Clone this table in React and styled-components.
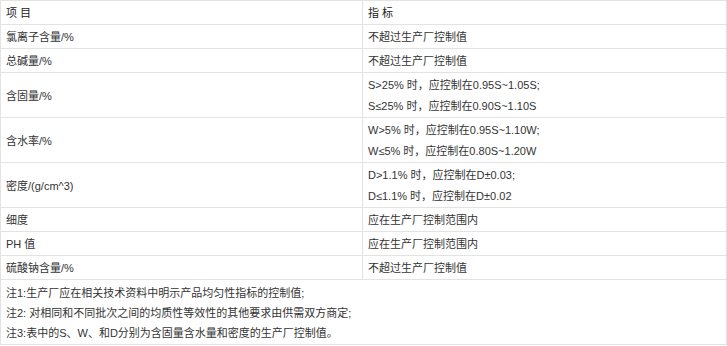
import React from 'react'
import styled, { createGlobalStyle } from 'styled-components'

const GlobalStyle = createGlobalStyle`
  body {
    margin: 0;
    background: #fff;
    font-family: "Liberation Sans", "Noto Sans CJK SC", sans-serif;
    font-size: 11px;
    color: #333;
  }
`

const Table = styled.table`
  width: 726px;
  border-collapse: collapse;
  table-layout: fixed;
  border: 1px solid #e3e3e3;
`

const Cell = styled.td`
  border: 1px solid #e3e3e3;
  padding: 2px 5px 0;
  line-height: 21px;
  vertical-align: middle;
  white-space: nowrap;
`

const HeadCell = styled(Cell)`
  color: #222;
`

const NoteCell = styled(Cell)`
  padding: 3px 5px 1px;
  line-height: 20px;
`

const Line = styled.div``

const rows = [
  ['氯离子含量/%', ['不超过生产厂控制值']],
  ['总碱量/%', ['不超过生产厂控制值']],
  ['含固量/%', ['S>25% 时，应控制在0.95S~1.05S;', 'S≤25% 时，应控制在0.90S~1.10S']],
  ['含水率/%', ['W>5% 时，应控制在0.95S~1.10W;', 'W≤5% 时，应控制在0.80S~1.20W']],
  ['密度/(g/cm^3)', ['D>1.1% 时，应控制在D±0.03;', 'D≤1.1% 时，应控制在D±0.02']],
  ['细度', ['应在生产厂控制范围内']],
  ['PH 值', ['应在生产厂控制范围内']],
  ['硫酸钠含量/%', ['不超过生产厂控制值']],
]

const notes = [
  '注1:生产厂应在相关技术资料中明示产品均匀性指标的控制值;',
  '注2: 对相同和不同批次之间的均质性等效性的其他要求由供需双方商定;',
  '注3:表中的S、W、和D分别为含固量含水量和密度的生产厂控制值。',
]

export default function App() {
  return (
    <>
      <GlobalStyle />
      <Table>
        <colgroup>
          <col style={{ width: 362 }} />
          <col style={{ width: 364 }} />
        </colgroup>
        <tbody>
          <tr>
            <HeadCell>项 目</HeadCell>
            <HeadCell>指 标</HeadCell>
          </tr>
          {rows.map(([name, values]) => (
            <tr key={name}>
              <Cell>{name}</Cell>
              <Cell>
                {values.map(v => (
                  <Line key={v}>{v}</Line>
                ))}
              </Cell>
            </tr>
          ))}
          <tr>
            <NoteCell colSpan={2}>
              {notes.map(n => (
                <Line key={n}>{n}</Line>
              ))}
            </NoteCell>
          </tr>
        </tbody>
      </Table>
    </>
  )
}
